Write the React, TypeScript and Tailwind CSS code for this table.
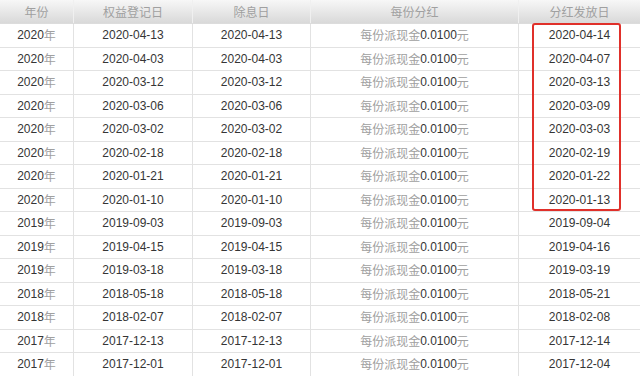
const rows: [string, string, string, string][] = [
  ["2020", "2020-04-13", "2020-04-13", "2020-04-14"],
  ["2020", "2020-04-03", "2020-04-03", "2020-04-07"],
  ["2020", "2020-03-12", "2020-03-12", "2020-03-13"],
  ["2020", "2020-03-06", "2020-03-06", "2020-03-09"],
  ["2020", "2020-03-02", "2020-03-02", "2020-03-03"],
  ["2020", "2020-02-18", "2020-02-18", "2020-02-19"],
  ["2020", "2020-01-21", "2020-01-21", "2020-01-22"],
  ["2020", "2020-01-10", "2020-01-10", "2020-01-13"],
  ["2019", "2019-09-03", "2019-09-03", "2019-09-04"],
  ["2019", "2019-04-15", "2019-04-15", "2019-04-16"],
  ["2019", "2019-03-18", "2019-03-18", "2019-03-19"],
  ["2018", "2018-05-18", "2018-05-18", "2018-05-21"],
  ["2018", "2018-02-07", "2018-02-07", "2018-02-08"],
  ["2017", "2017-12-13", "2017-12-13", "2017-12-14"],
  ["2017", "2017-12-01", "2017-12-01", "2017-12-04"],
];

const grid = "grid grid-cols-[74px_119px_118px_208px_121px]";
const cjk = "font-['Noto_Sans_CJK_SC',sans-serif] text-[#a0a0a0]";
const num = "font-['Liberation_Sans',Arial,sans-serif] text-[#353535]";

export default function App() {
  return (
    <div className="relative h-[376px] w-[640px] overflow-hidden bg-white text-[12px]">
      <div className={`${grid} h-[24px] border-b border-[#dcdcdc] bg-gradient-to-b from-[#f7f7f7] to-[#d9d9d9]`}>
        {["年份", "权益登记日", "除息日", "每份分红", "分红发放日"].map((h, i) => (
          <div
            key={h}
            className={`flex items-center justify-center ${cjk} text-[#8c8c8c] ${i < 4 ? "border-r border-[#f0f0f0]" : ""}`}
          >
            {h}
          </div>
        ))}
      </div>
      {rows.map((r, idx) => (
        <div key={idx} className={`${grid} h-[23.5px] border-b border-[#e2e2e2]`}>
          <div className="flex items-center justify-center border-r border-[#e2e2e2]">
            <span className={num}>{r[0]}</span>
            <span className={cjk}>年</span>
          </div>
          <div className={`flex items-center justify-center border-r border-[#e2e2e2] ${num}`}>{r[1]}</div>
          <div className={`flex items-center justify-center border-r border-[#e2e2e2] ${num}`}>{r[2]}</div>
          <div className="flex items-center justify-center border-r border-[#e2e2e2]">
            <span className={cjk}>每份派现金</span>
            <span className={num}>0.0100</span>
            <span className={cjk}>元</span>
          </div>
          <div className={`flex items-center justify-center ${num}`}>{r[3]}</div>
        </div>
      ))}
      <div className="absolute left-[532px] top-[23px] h-[188px] w-[89px] rounded-[3px] border-2 border-[#e0302a]" />
    </div>
  );
}
